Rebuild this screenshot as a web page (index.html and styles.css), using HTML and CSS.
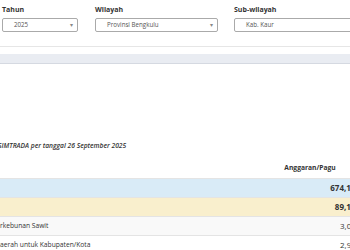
FILE: index.html
```html
<!DOCTYPE html>
<html>

<head>
  <meta charset="utf8">
  <title>Realisasi Anggaran</title>
  <link rel="stylesheet" href="styles.css">
</head>

<body>
  <section class="filters">
    <div class="field year">
      <label>Tahun</label>
      <div class="select">2025 <span class="caret">&#9662;</span></div>
    </div>
    <div class="field region">
      <label>Wilayah</label>
      <div class="select">Provinsi Bengkulu <span class="caret">&#9662;</span></div>
    </div>
    <div class="field subregion">
      <label>Sub-wilayah</label>
      <div class="select">Kab. Kaur <span class="caret">&#9662;</span></div>
    </div>
  </section>
  <div class="band"></div>

  <section class="report">
    <p class="source">Sumber: SIMTRADA per tanggal 26 September 2025</p>
    <table>
      <thead>
        <tr>
          <th class="name"></th>
          <th class="value">Anggaran/Pagu</th>
        </tr>
      </thead>
      <tbody>
        <tr class="total">
          <td class="name">Pendapatan</td>
          <td class="value">674,125,390,210</td>
        </tr>
        <tr class="group">
          <td class="name">Transfer</td>
          <td class="value">89,186,704,000</td>
        </tr>
        <tr class="item">
          <td class="name sawit">Dana Bagi Hasil Perkebunan Sawit</td>
          <td class="value">3,045,120,000</td>
        </tr>
        <tr class="item">
          <td class="name insentif">Dana Insentif Daerah untuk Kabupaten/Kota</td>
          <td class="value">2,967,450,000</td>
        </tr>
      </tbody>
    </table>
  </section>
</body>

</html>
```

FILE: styles.css
```css
body {
  margin: 0;
  font: 6.7px/12px "Open Sans", sans-serif;
  color: #333;
  background: #fff;
  overflow: hidden;
  width: 350px;
  height: 250px;
}

.filters {
  display: flex;
  gap: 17px;
  padding: 4px 0 0 2px;
  height: 42px;
  border-bottom: 1px solid #e6e6e6;
  white-space: nowrap;
}

.field {
  flex-shrink: 0;
}

.field label {
  display: block;
  font-size: 7px;
  font-weight: bold;
  margin-bottom: 2px;
}

.year {
  width: 76px;
}

.region {
  width: 123px;
  margin-right: -1px;
}

.subregion {
  width: 160px;
}

.select {
  position: relative;
  box-sizing: border-box;
  height: 14px;
  border: 1px solid #aaa;
  border-radius: 2px;
  padding-left: 11px;
  font-size: 6.2px;
  line-height: 12px;
  color: #555;
}

.caret {
  position: absolute;
  right: 4px;
  top: 0;
  font-size: 6px;
  color: #888;
}

.band {
  margin-top: 7px;
  height: 9px;
  background: #e9ecf2;
  border-bottom: 1px solid #d5d9e1;
}

.report {
  margin-left: -110px;
  width: 508px;
}

.source {
  margin: 76px 0 0;
  padding-left: 81px;
  font-style: italic;
  font-weight: 600;
  line-height: 12px;
}

table {
  margin-top: 6px;
  border-collapse: collapse;
  table-layout: fixed;
  width: 508px;
  font: inherit;
}

th {
  font-weight: bold;
  height: 20px;
  padding: 0 6px;
  vertical-align: middle;
}

td {
  height: 18px;
  padding: 0 6px;
  border-top: 1px solid #e4e4e4;
}

.name {
  width: 326px;
  text-align: left;
}

th.value {
  text-align: center;
  padding-right: 12px;
}

td.value {
  text-align: right;
  font-size: 8px;
}

.total td {
  background: #d9ebf7;
  font-weight: bold;
}

.group td {
  background: #f9efcd;
  font-weight: bold;
}

.item:nth-child(odd) td {
  background: #f9f9f9;
}

.sawit {
  padding-left: 52px;
}

.insentif {
  padding-left: 62px;
}
```
